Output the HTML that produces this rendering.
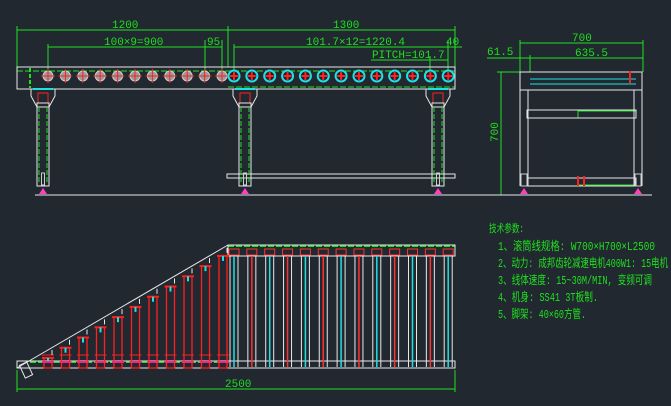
<!DOCTYPE html>
<html><head><meta charset="utf-8"><style>
html,body{margin:0;padding:0;background:#212830;width:671px;height:406px;overflow:hidden}
svg{display:block}
text{font-family:"Liberation Mono","Noto Sans CJK SC",monospace;fill:#1fe01f}
</style></head><body>
<svg id="s" width="671" height="406" viewBox="0 0 671 406" xmlns="http://www.w3.org/2000/svg">
<rect width="671" height="406" fill="#212830"/>
<g stroke="#1fe01f" stroke-width="1" fill="none">
<line x1="17" y1="30" x2="455" y2="30"/>
<line x1="17" y1="26" x2="17" y2="67"/><line x1="228" y1="26" x2="228" y2="67"/><line x1="455" y1="26" x2="455" y2="67"/>
<line x1="48" y1="47" x2="222" y2="47"/><line x1="48" y1="44" x2="48" y2="76"/><line x1="205" y1="40" x2="205" y2="76"/><line x1="222" y1="40" x2="222" y2="76"/>
<line x1="234" y1="47" x2="462" y2="47"/><line x1="234" y1="44" x2="234" y2="76"/><line x1="448" y1="40" x2="448" y2="76"/>
<line x1="371" y1="60" x2="448" y2="60"/><line x1="430" y1="56" x2="430" y2="76"/>
<line x1="520" y1="43" x2="643" y2="43"/><line x1="520" y1="40" x2="520" y2="72"/><line x1="643" y1="40" x2="643" y2="72"/>
<line x1="487" y1="58" x2="643" y2="58"/><line x1="530" y1="55" x2="530" y2="72"/>
<line x1="501" y1="72" x2="501" y2="195"/><line x1="497" y1="72" x2="520" y2="72"/>
<line x1="17" y1="389" x2="455" y2="389"/><line x1="17" y1="370" x2="17" y2="392"/><line x1="455" y1="370" x2="455" y2="392"/>
<line x1="17" y1="71" x2="455" y2="71" stroke-dasharray="6 2"/>
<line x1="228" y1="87" x2="455" y2="87" stroke-dasharray="6 2"/>
<line x1="30" y1="68" x2="30" y2="88" stroke-width="2" stroke-dasharray="4 2"/>
<line x1="228" y1="246" x2="455" y2="246" stroke-width="2" stroke-dasharray="6 2"/>
<line x1="30" y1="362" x2="228" y2="362" stroke-width="2" stroke-dasharray="6 2"/>
<rect x="578" y="111" width="58" height="7"/><rect x="578" y="178" width="58" height="7"/>
</g>
<g fill="#1fe01f" font-size="11">
<text x="112" y="28">1200</text>
<text x="333" y="28">1300</text>
<text x="104" y="45">100×9=900</text>
<text x="207" y="45">95</text>
<text x="306" y="45">101.7×12=1220.4</text>
<text x="446" y="45">40</text>
<text x="372" y="58">PITCH=101.7</text>
<text x="572" y="41">700</text>
<text x="575" y="56">635.5</text>
<text x="487" y="55">61.5</text>
<text x="0" y="0" transform="translate(498,142) rotate(-90)">700</text>
<text x="225" y="387">2500</text>
<text x="489" y="232" font-size="11" textLength="35" lengthAdjust="spacingAndGlyphs">技术参数:</text>
<text x="498" y="250" font-size="12" textLength="157" lengthAdjust="spacingAndGlyphs">1、滚筒线规格: W700×H700×L2500</text>
<text x="498" y="267" font-size="12" textLength="170" lengthAdjust="spacingAndGlyphs">2、动力: 成邦齿轮减速电机400W1: 15电机</text>
<text x="498" y="284" font-size="12" textLength="154" lengthAdjust="spacingAndGlyphs">3、线体速度: 15~30M/MIN, 变频可调</text>
<text x="498" y="301" font-size="12" textLength="100" lengthAdjust="spacingAndGlyphs">4、机身: SS41 3T板制.</text>
<text x="498" y="318" font-size="12" textLength="88" lengthAdjust="spacingAndGlyphs">5、脚架: 40×60方管.</text>
</g>
<g stroke="#e8e8e8" stroke-width="1" fill="none">
<rect x="17" y="67" width="438" height="22"/>
<line x1="35" y1="195" x2="470" y2="195"/>
<rect x="227" y="174" width="228" height="4"/>
<line x1="470" y1="195" x2="652" y2="195"/>
<rect x="520" y="72" width="122" height="18"/>
<line x1="520" y1="72" x2="520" y2="186"/><line x1="528" y1="90" x2="528" y2="186"/>
<line x1="634" y1="90" x2="634" y2="186"/><line x1="642" y1="72" x2="642" y2="186"/>
<rect x="527" y="110" width="109" height="8"/><rect x="527" y="178" width="109" height="8"/>
<line x1="17" y1="368" x2="228" y2="245"/>
<rect x="228" y="245" width="227" height="11"/>
<rect x="17" y="361" width="438" height="7"/>
</g>
<g stroke="#20e0e0" stroke-width="1" fill="none">
<line x1="530" y1="79" x2="636" y2="79"/><line x1="530" y1="84" x2="636" y2="84"/>
</g>
<g stroke="#ff2020" stroke-width="2"><line x1="630" y1="71" x2="630" y2="83"/><line x1="578" y1="176" x2="578" y2="186"/><line x1="584" y1="176" x2="584" y2="186"/></g>
<g id="gen"></g>
</svg>
<script>
var g=document.getElementById('gen'),ns='http://www.w3.org/2000/svg';
function e(t,a){var n=document.createElementNS(ns,t);for(var k in a)n.setAttribute(k,a[k]);g.appendChild(n);return n}
for(var i=0;i<11;i++){var x=48+i*17.4;e('circle',{cx:x,cy:76,r:5,fill:'#9a9a9a',stroke:'#d0d0d0'});e('line',{x1:x-7,y1:76,x2:x+7,y2:76,stroke:'#ff2020'});e('line',{x1:x,y1:69,x2:x,y2:83,stroke:'#ff2020'});}
for(var i=0;i<13;i++){var x=234+i*17.85;e('circle',{cx:x,cy:76,r:5.5,fill:'#1a2030',stroke:'#20e0e0','stroke-width':2});e('line',{x1:x-4,y1:76,x2:x+4,y2:76,stroke:'#ff2020','stroke-width':2});e('line',{x1:x,y1:72,x2:x,y2:80,stroke:'#ff2020','stroke-width':2});}
[43,245,438].forEach(function(c){
e('path',{d:'M'+(c-12)+' 89 L'+(c+12)+' 89 L'+(c+12)+' 96 L'+(c+6)+' 107 L'+(c-6)+' 107 L'+(c-12)+' 96 Z',fill:'none',stroke:'#e8e8e8'});
e('line',{x1:c-10,y1:89,x2:c+10,y2:89,stroke:'#20e0e0','stroke-width':2});
e('rect',{x:c-5,y:93,width:10,height:10,fill:'none',stroke:'#ff2020'});
e('rect',{x:c-6,y:103,width:12,height:83,fill:'none',stroke:'#e8e8e8'});
e('line',{x1:c-4,y1:107,x2:c-4,y2:184,stroke:'#1fe01f','stroke-dasharray':'5 2'});
e('line',{x1:c+4,y1:107,x2:c+4,y2:184,stroke:'#1fe01f','stroke-dasharray':'5 2'});
e('rect',{x:c-1.5,y:173,width:3,height:12,fill:'none',stroke:'#ccc'});
e('path',{d:'M'+(c-4)+' 194 L'+c+' 188 L'+(c+4)+' 194 Z',fill:'#ff40c0'});
});
[524,638].forEach(function(c){e('rect',{x:c-3,y:174,width:6,height:12,fill:'none',stroke:'#ccc'});e('path',{d:'M'+(c-4)+' 194 L'+c+' 188 L'+(c+4)+' 194 Z',fill:'#ff40c0'});});
for(var i=0;i<13;i++){var x=234+i*17.85;
e('rect',{x:x-5,y:249,width:10,height:6,fill:'none',stroke:'#ff3030'});
e('line',{x1:x-4,y1:256,x2:x-4,y2:367,stroke:'#e8e8e8'});e('line',{x1:x+4,y1:256,x2:x+4,y2:367,stroke:'#e8e8e8'});
e('line',{x1:x,y1:256,x2:x,y2:367,stroke:(i%2?'#ff3030':'#20e0e0'),'stroke-width':1.5});}
for(var i=0;i<11;i++){var x=48+i*17.5;var yt=368-(x-17)*123/211+8;
e('rect',{x:x-4,y:yt,width:8,height:368-yt,fill:'none',stroke:'#ff2020','stroke-width':1.3});
e('line',{x1:x-6,y1:yt,x2:x+6,y2:yt,stroke:'#ff2020','stroke-width':2});
e('line',{x1:x,y1:yt,x2:x,y2:yt+5,stroke:'#20e0e0','stroke-width':2});
e('line',{x1:x-6,y1:362,x2:x+6,y2:362,stroke:'#ff2080','stroke-width':2});
e('line',{x1:x-6,y1:355,x2:x+6,y2:355,stroke:'#ff2020'});
e('line',{x1:x+4,y1:yt-8,x2:x+4,y2:yt-3,stroke:'#e8e8e8'});}
e('rect',{x:22,y:363,width:8,height:14,fill:'none',stroke:'#e8e8e8',transform:'rotate(-25 26 370)'});
</script>
</body></html>
